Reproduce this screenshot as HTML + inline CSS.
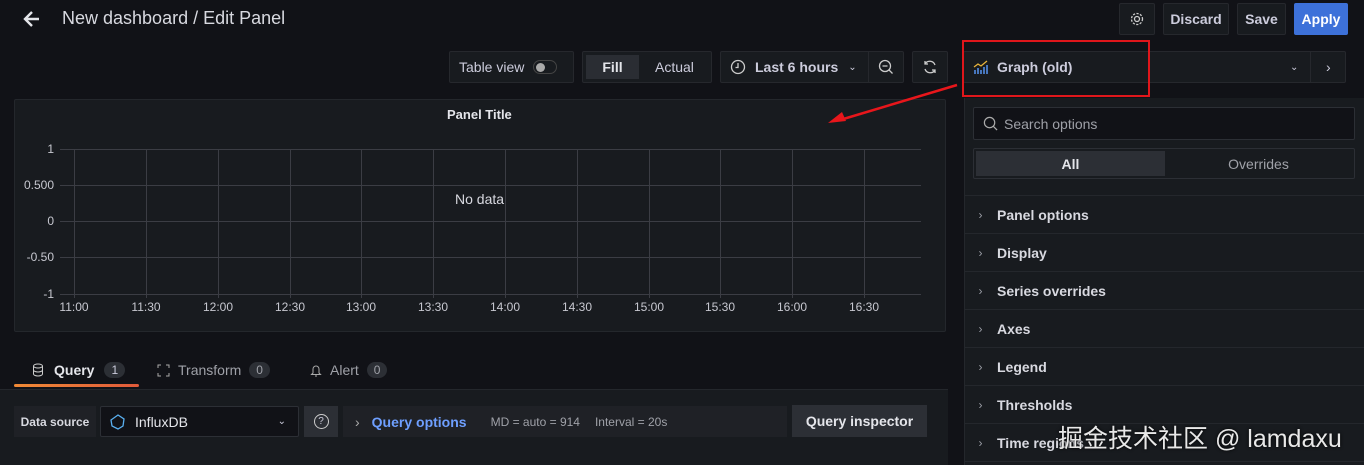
<!DOCTYPE html>
<html><head><meta charset="utf-8"><style>
*{box-sizing:border-box;margin:0;padding:0}
body{width:1364px;height:465px;overflow:hidden;background:#111217;font-family:"Liberation Sans","Noto Sans CJK SC",sans-serif;color:#ccccdc;position:relative;font-size:14px}
.a{position:absolute}
.btn{position:absolute;background:#181b1f;border:1px solid #26282d;border-radius:2px;display:flex;align-items:center;justify-content:center;font-size:14px;color:#ccccdc}
.row{position:absolute;left:964px;width:400px;height:38px;border-bottom:1px solid #24272c;display:flex;align-items:center;font-weight:bold;color:#d8d9e0;font-size:14px}
.row span.c{width:33px;text-align:center;color:#9a9ca5;font-weight:normal;font-size:12px}
.yl{position:absolute;right:1310px;font-size:12px;color:#c7c8d0;text-align:right}
.xl{position:absolute;top:300px;font-size:12px;color:#c7c8d0;transform:translateX(-50%)}
</style></head><body>
<svg class="a" style="left:22px;top:9px" width="20" height="20" viewBox="0 0 20 20"><path d="M17 10H4M10 3L3 10l7 7" stroke="#e4e5ea" stroke-width="2.4" fill="none"/></svg>
<div class="a" style="left:62px;top:8px;font-size:18px;color:#d8d9e0">New dashboard / Edit Panel</div>
<div class="btn" style="left:1119px;top:3px;width:36px;height:32px"><svg width="16" height="16" viewBox="0 0 16 16"><circle cx="8" cy="8" r="2.5" fill="none" stroke="#ccc" stroke-width="1.3"/><circle cx="8" cy="8" r="5.5" fill="none" stroke="#ccc" stroke-width="1.3" stroke-dasharray="2.2 1.4"/></svg></div>
<div class="btn" style="left:1163px;top:3px;width:66px;height:32px;font-weight:bold">Discard</div>
<div class="btn" style="left:1237px;top:3px;width:49px;height:32px;font-weight:bold">Save</div>
<div class="btn" style="left:1294px;top:3px;width:54px;height:32px;background:#3d71d9;border-color:#3d71d9;color:#fff;font-weight:bold">Apply</div>

<div class="btn" style="left:449px;top:51px;width:125px;height:32px;justify-content:flex-start;padding-left:9px">Table view<span style="margin-left:9px;width:24px;height:14px;border:1px solid #444;border-radius:8px;position:relative"><span style="position:absolute;left:2px;top:2px;width:9px;height:9px;border-radius:50%;background:#aaa"></span></span></div>
<div class="btn" style="left:582px;top:51px;width:130px;height:32px;justify-content:flex-start;padding:3px"><span style="background:#2a2d33;height:24px;width:53px;display:flex;align-items:center;justify-content:center;font-weight:bold;color:#e4e5ea">Fill</span><span style="margin-left:16px">Actual</span></div>
<div class="btn" style="left:720px;top:51px;width:184px;height:32px;justify-content:flex-start;padding-left:9px"><svg width="16" height="16" viewBox="0 0 16 16"><circle cx="8" cy="8" r="6.5" fill="none" stroke="#ccc" stroke-width="1.3"/><path d="M8 4v4.5H5.5" stroke="#ccc" stroke-width="1.3" fill="none"/></svg><span style="margin-left:9px;font-weight:bold">Last 6 hours</span><span style="margin-left:10px;font-size:10px">&#8964;</span><span style="position:absolute;left:147px;top:0;height:30px;border-left:1px solid #26282d"></span><svg class="a" style="left:157px;top:7px" width="16" height="16" viewBox="0 0 16 16"><circle cx="7" cy="7" r="5.5" fill="none" stroke="#ccc" stroke-width="1.3"/><path d="M4.5 7h5M11 11l3.5 3.5" stroke="#ccc" stroke-width="1.3"/></svg></div>
<div class="btn" style="left:912px;top:51px;width:36px;height:32px"><svg width="16" height="16" viewBox="0 0 16 16"><path d="M13 6A5.5 5.5 0 0 0 3 5M3 10a5.5 5.5 0 0 0 10 1M3 2v3h3M13 14v-3h-3" stroke="#ccc" stroke-width="1.3" fill="none"/></svg></div>
<div class="btn" style="left:963px;top:51px;width:383px;height:32px;justify-content:flex-start;padding-left:9px"><svg width="16" height="16" viewBox="0 0 16 16"><path d="M1 8l4-3 3 2 6-5" stroke="#e8b53c" stroke-width="1.3" fill="none"/><path d="M2 15v-4M5 15v-6M8 15v-4M11 15v-7M14 15v-9" stroke="#5794f2" stroke-width="1.5"/></svg><span style="margin-left:8px;font-weight:bold">Graph (old)</span><span style="position:absolute;left:326px;font-size:10px">&#8964;</span><span style="position:absolute;left:346px;top:0;height:30px;border-left:1px solid #26282d"></span><span style="position:absolute;left:362px;font-size:14px">›</span></div>
<div class="a" style="left:962px;top:40px;width:188px;height:57px;border:2px solid #e0161b"></div>

<div class="a" style="left:14px;top:99px;width:932px;height:233px;background:#181b1f;border:1px solid #24272c;border-radius:2px"></div>
<div class="a" style="left:447px;top:107px;font-size:13px;font-weight:bold;color:#e4e5ea">Panel Title</div>
<svg class="a" style="left:0;top:0" width="950" height="340">
<g stroke="#3b3d44" stroke-width="1">
<path d="M60 149.5H921M60 185.5H921M60 221.5H921M60 257.5H921M60 294.5H921"/>
<path d="M74.5 149V298M146.5 149V298M218.5 149V298M290.5 149V298M361.5 149V298M433.5 149V298M505.5 149V298M577.5 149V298M649.5 149V298M720.5 149V298M792.5 149V298M864.5 149V298"/>
</g></svg>
<svg class="a" style="left:820px;top:80px" width="140" height="50"><path d="M137 5L20 40" stroke="#e8161b" stroke-width="2.5"/><path d="M8 43l14-11 4 9z" fill="#e8161b"/></svg>
<div class="yl" style="top:142px">1</div>
<div class="yl" style="top:178px">0.500</div>
<div class="yl" style="top:214px">0</div>
<div class="yl" style="top:250px">-0.50</div>
<div class="yl" style="top:287px">-1</div>
<div class="xl" style="left:74px">11:00</div><div class="xl" style="left:146px">11:30</div><div class="xl" style="left:218px">12:00</div><div class="xl" style="left:290px">12:30</div><div class="xl" style="left:361px">13:00</div><div class="xl" style="left:433px">13:30</div><div class="xl" style="left:505px">14:00</div><div class="xl" style="left:577px">14:30</div><div class="xl" style="left:649px">15:00</div><div class="xl" style="left:720px">15:30</div><div class="xl" style="left:792px">16:00</div><div class="xl" style="left:864px">16:30</div>
<div class="a" style="left:455px;top:191px;font-size:14px;color:#d8d9e0">No data</div>

<div class="a" style="left:32px;top:362px;font-size:14px;display:flex;align-items:center;gap:6px"><svg width="12" height="14" viewBox="0 0 12 14"><ellipse cx="6" cy="3" rx="4.5" ry="2" fill="none" stroke="#ccc"/><path d="M1.5 3v8c0 1 2 2 4.5 2s4.5-1 4.5-2V3M1.5 7c0 1 2 2 4.5 2s4.5-1 4.5-2" fill="none" stroke="#ccc"/></svg><b style="color:#e4e5ea;margin-left:4px">Query</b><span style="background:#2c2f35;border-radius:9px;padding:1px 7px;font-size:12px;margin-left:4px">1</span></div>
<div class="a" style="left:14px;top:384px;width:125px;height:3px;background:linear-gradient(90deg,#f08a36,#e05a3a);border-radius:2px"></div>
<div class="a" style="left:157px;top:362px;font-size:14px;color:#9fa1a8;display:flex;align-items:center;gap:8px"><svg width="13" height="13" viewBox="0 0 13 13"><path d="M1 4V1h3M9 1h3v3M12 9v3H9M4 12H1V9" fill="none" stroke="#aaa"/></svg>Transform<span style="background:#2c2f35;border-radius:9px;padding:1px 7px;font-size:12px">0</span></div>
<div class="a" style="left:310px;top:362px;font-size:14px;color:#9fa1a8;display:flex;align-items:center;gap:8px"><svg width="12" height="14" viewBox="0 0 12 14"><path d="M3 10V6a3 3 0 0 1 6 0v4l1.5 1.5h-9zM5 13h2" fill="none" stroke="#aaa"/></svg>Alert<span style="background:#2c2f35;border-radius:9px;padding:1px 7px;font-size:12px">0</span></div>
<div class="a" style="left:0;top:389px;width:948px;height:76px;background:#181b1f;border-top:1px solid #24272c"></div>
<div class="a" style="left:14px;top:406px;width:82px;height:31px;background:#1f2126;font-size:12px;font-weight:bold;display:flex;align-items:center;justify-content:center;color:#d8d9e0">Data source</div>
<div class="a" style="left:100px;top:406px;width:199px;height:31px;background:#111217;border:1px solid #2c2f35;border-radius:2px;display:flex;align-items:center;padding-left:9px"><svg width="16" height="16" viewBox="0 0 16 16"><path d="M8 1l6 4-1 7-5 3-6-3-1-6z" fill="none" stroke="#5ab0f0" stroke-width="1.3"/></svg><span style="margin-left:9px;color:#e4e5ea">InfluxDB</span><span style="position:absolute;right:12px;font-size:10px">&#8964;</span></div>
<div class="a" style="left:304px;top:406px;width:34px;height:31px;background:#2c2f35;display:flex;align-items:center;justify-content:center"><span style="width:15px;height:15px;border:1.3px solid #ccc;border-radius:50%;font-size:10px;display:flex;align-items:center;justify-content:center">?</span></div>
<div class="a" style="left:343px;top:406px;width:444px;height:31px;background:#1f2126;display:flex;align-items:center;padding-left:12px"><span style="color:#aaa">›</span><span style="margin-left:12px;color:#6e9fff;font-weight:bold">Query options</span><span style="margin-left:24px;font-size:12px;color:#9fa1a8">MD = auto = 914</span><span style="margin-left:15px;font-size:12px;color:#9fa1a8">Interval = 20s</span></div>
<div class="a" style="left:792px;top:405px;width:135px;height:32px;background:#2c2f35;display:flex;align-items:center;justify-content:center;font-weight:bold;color:#e4e5ea">Query inspector</div>

<div class="a" style="left:964px;top:98px;width:400px;height:367px;background:#181b1f;border-left:1px solid #24272c"></div>
<div class="a" style="left:973px;top:107px;width:382px;height:33px;background:#111217;border:1px solid #2c2f35;border-radius:2px;display:flex;align-items:center;padding-left:9px"><svg width="15" height="15" viewBox="0 0 16 16"><circle cx="7" cy="7" r="5.5" fill="none" stroke="#aaa" stroke-width="1.3"/><path d="M11 11l4 4" stroke="#aaa" stroke-width="1.3"/></svg><span style="margin-left:6px;color:#9fa1a8">Search options</span></div>
<div class="a" style="left:973px;top:148px;width:382px;height:31px;border:1px solid #2c2f35;border-radius:2px;display:flex;padding:2px"><span style="width:189px;background:#2c2f35;display:flex;align-items:center;justify-content:center;font-weight:bold;color:#e4e5ea">All</span><span style="flex:1;display:flex;align-items:center;justify-content:center;color:#9fa1a8">Overrides</span></div>
<div class="a" style="left:964px;top:195px;width:400px;border-top:1px solid #24272c"></div>
<div class="row" style="top:196px"><span class="c">›</span>Panel options</div>
<div class="row" style="top:234px"><span class="c">›</span>Display</div>
<div class="row" style="top:272px"><span class="c">›</span>Series overrides</div>
<div class="row" style="top:310px"><span class="c">›</span>Axes</div>
<div class="row" style="top:348px"><span class="c">›</span>Legend</div>
<div class="row" style="top:386px"><span class="c">›</span>Thresholds</div>
<div class="row" style="top:424px"><span class="c">›</span>Time regions</div>
<div class="a" style="left:1058px;top:419px;font-size:25px;color:#e8e8e8;text-shadow:0 0 3px #000">掘金技术社区 @ lamdaxu</div>
</body></html>
